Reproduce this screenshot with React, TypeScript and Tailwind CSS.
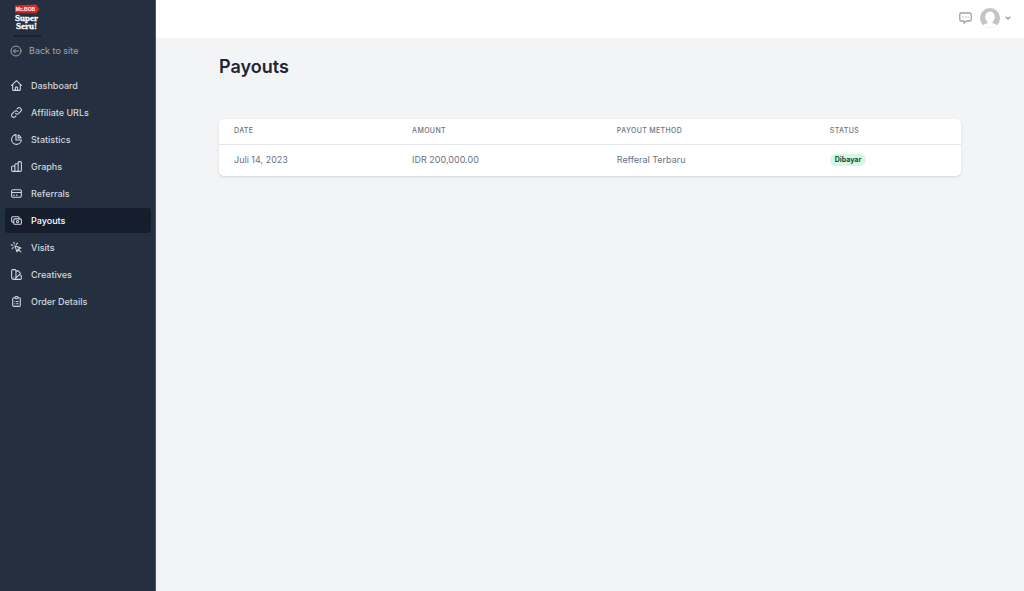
import type { IconType } from "react-icons";
import {
    HiChevronDown,
    HiOutlineCash,
    HiOutlineChartBar,
    HiOutlineChartPie,
    HiOutlineClipboardList,
    HiOutlineColorSwatch,
    HiOutlineCreditCard,
    HiOutlineCursorClick,
    HiOutlineHome,
    HiOutlineLink,
} from "react-icons/hi";

interface NavItemProps {
    label: string;
    icon: IconType;
    active?: boolean;
}

const navItems: NavItemProps[] = [
    { label: "Dashboard", icon: HiOutlineHome },
    { label: "Affiliate URLs", icon: HiOutlineLink },
    { label: "Statistics", icon: HiOutlineChartPie },
    { label: "Graphs", icon: HiOutlineChartBar },
    { label: "Referrals", icon: HiOutlineCreditCard },
    { label: "Payouts", icon: HiOutlineCash, active: true },
    { label: "Visits", icon: HiOutlineCursorClick },
    { label: "Creatives", icon: HiOutlineColorSwatch },
    { label: "Order Details", icon: HiOutlineClipboardList },
];

const payouts = [
    {
        date: "Juli 14, 2023",
        amount: "IDR 200,000.00",
        method: "Refferal Terbaru",
        status: "Dibayar",
    },
];

const Logo = () => (
    <svg
        viewBox="0 0 30 38"
        className="w-[30px] h-[38px]"
        role="img"
        aria-label="Mc.BOB Super Seru!"
    >
        <path d="M3 5.500 24 4.500 27.500 9 24 13.500 3 13z" fill="#dc2a2a" />
        <path d="M3 12.200 24.500 12.700 24 14 3 13.500z" fill="#8f1d27" />
        <g fill="#ffffff" fontWeight="700" textAnchor="middle">
            <text x="13.500" y="11" fontSize="5" fontFamily="'Liberation Sans', sans-serif">
                Mc.BOB
            </text>
            <text
                fontSize="9"
                fontFamily="'Liberation Serif', serif"
                stroke="#ffffff"
                strokeWidth="0.300"
            >
                <tspan x="14.500" y="21">
                    Super
                </tspan>
                <tspan x="14.500" y="29">
                    Seru!
                </tspan>
            </text>
        </g>
        <path d="M1 36h28" stroke="#141d2c" strokeWidth="1.500" />
    </svg>
);

const BackIcon = () => (
    <svg
        viewBox="0 0 24 24"
        className="size-3"
        fill="none"
        stroke="currentColor"
        strokeWidth="2"
        strokeLinecap="round"
        strokeLinejoin="round"
        aria-hidden="true"
    >
        <circle cx="12" cy="12" r="10" />
        <path d="M17 12H7m4-4-4 4 4 4" />
    </svg>
);

const ChatIcon = () => (
    <svg
        viewBox="0 0 13 13"
        className="size-[13px]"
        fill="none"
        stroke="#a3a3a3"
        strokeWidth="1.300"
        strokeLinejoin="round"
        aria-hidden="true"
    >
        <path d="M2 1h9a1.200 1.200 0 0 1 1.200 1.200v5.600A1.200 1.200 0 0 1 11 9H7.500L5 11.300V9H2A1.200 1.200 0 0 1 .8 7.800V2.200A1.200 1.200 0 0 1 2 1z" />
        <path d="M3.300 5h6.500" stroke="#c4c4c4" strokeDasharray="1.300 1.300" />
    </svg>
);

const Avatar = () => (
    <svg viewBox="0 0 20 20" className="size-5" aria-hidden="true">
        <defs>
            <clipPath id="avatar">
                <circle cx="10" cy="10" r="10" />
            </clipPath>
        </defs>
        <g clipPath="url(#avatar)">
            <rect width="20" height="20" fill="#c4c4c4" />
            <ellipse cx="10" cy="9" rx="4.800" ry="5.600" fill="#ffffff" />
            <path d="M7.500 12h5v3.200c3 .6 5 1.800 6 4.800h-17c1-3 3-4.200 6-4.800z" fill="#ffffff" />
        </g>
    </svg>
);

const NavItem = ({ label, icon: Icon, active }: NavItemProps) => (
    <a
        href="#"
        aria-current={active ? "page" : undefined}
        className={`flex items-center gap-2 h-[25px] pl-[5px] rounded-[3px] text-[9px] font-medium ${
            active ? "bg-[#161e2e] text-white" : "text-[#d2d6dc]"
        }`}
    >
        <Icon size={13} className={active ? "text-[#d2d6dc]" : ""} />
        {label}
    </a>
);

const Sidebar = () => (
    <aside className="w-[156px] shrink-0 bg-[#243040] border-r border-[#4b5563]">
        <a href="#" className="block w-fit ml-3">
            <Logo />
        </a>
        <a
            href="#"
            className="flex items-center gap-[7px] h-[25px] pl-[10px] text-[9px] text-[#9fa6b2]"
        >
            <BackIcon />
            Back to site
        </a>
        <nav className="flex flex-col gap-[2px] pl-[5px] pr-1 mt-[10px]">
            {navItems.map((item) => (
                <NavItem key={item.label} {...item} />
            ))}
        </nav>
    </aside>
);

const Header = () => (
    <header className="flex items-center justify-end h-[38px] pr-[11px] pb-[2px] bg-white">
        <button type="button" aria-label="Messages">
            <ChatIcon />
        </button>
        <button
            type="button"
            aria-label="Account menu"
            className="flex items-center gap-[3px] ml-2 text-[#6b7280]"
        >
            <Avatar />
            <HiChevronDown size={10} />
        </button>
    </header>
);

const PayoutsTable = () => (
    <div className="rounded-[5px] bg-white shadow-sm overflow-hidden">
        <table className="w-full table-fixed text-left text-[#6b7280]">
            <thead>
                <tr className="h-[25px] border-b border-[#e5e7eb] text-[7px] leading-3 tracking-wider uppercase">
                    <th className="w-[24%] pl-[15px] font-medium">Date</th>
                    <th className="w-[27.6%] pl-[15px] font-medium">Amount</th>
                    <th className="w-[28.7%] pl-[15px] font-medium">
                        Payout Method
                    </th>
                    <th className="pl-[15px] font-medium">Status</th>
                </tr>
            </thead>
            <tbody>
                {payouts.map((payout) => (
                    <tr key={payout.date} className="h-8 text-[9px] leading-3">
                        <td className="pl-[15px]">{payout.date}</td>
                        <td className="pl-[15px]">{payout.amount}</td>
                        <td className="pl-[15px]">{payout.method}</td>
                        <td className="pl-[15px]">
                            <span className="flex items-center w-fit h-3 px-[5px] rounded-full bg-[#d5f7e8] text-[7px] font-bold text-[#03543f]">
                                {payout.status}
                            </span>
                        </td>
                    </tr>
                ))}
            </tbody>
        </table>
    </div>
);

const App = () => {
    return (
        <div className="flex min-h-screen bg-[#f3f4f6] font-['Inter',sans-serif]">
            <Sidebar />
            <div className="flex-1 min-w-0">
                <Header />
                <main className="px-[63px] pt-[17px]">
                    <h1 className="text-lg leading-6 font-semibold text-[#1f2433] mb-10">
                        Payouts
                    </h1>
                    <PayoutsTable />
                </main>
            </div>
        </div>
    );
};

export default App;
